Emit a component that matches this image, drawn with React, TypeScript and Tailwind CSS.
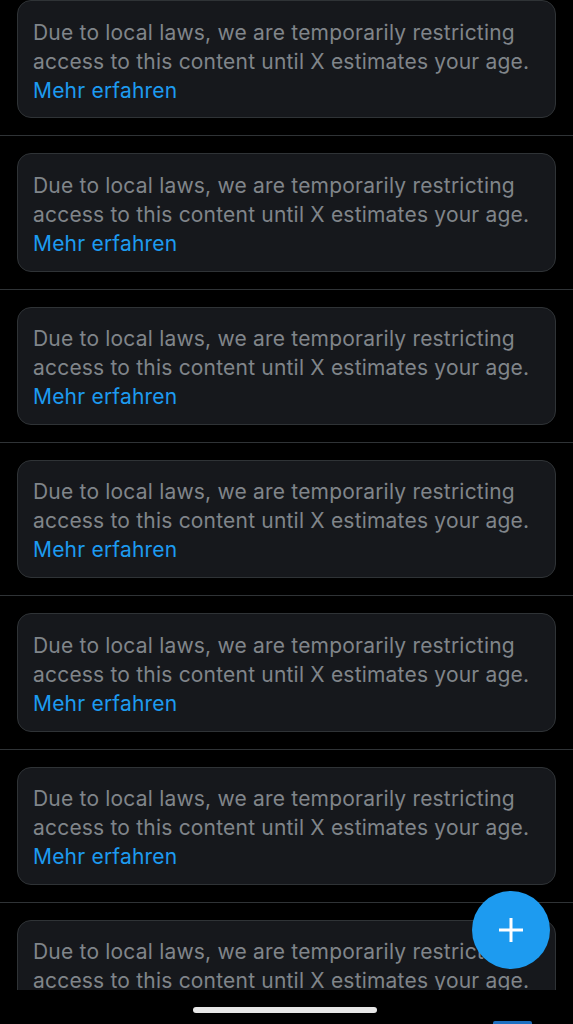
import React from "react";

const Item = ({ last }: { last?: boolean }) => (
  <div className={`px-[17px] py-[17px] ${last ? "" : "border-b border-[#2f3336]"}`}>
    <div className="flex flex-col rounded-[14px] border border-[#2f3336] bg-[#16181c] h-[118.33px] px-[15px] pt-[16.5px] text-[21px] leading-[29px] tracking-[0.2px]">
      <p className="text-[#80858a]">
        Due to local laws, we are temporarily restricting access to this content until X estimates your age.
      </p>
      <p className="text-[#1d9bf0]">Mehr erfahren</p>
    </div>
  </div>
);

export default function App() {
  return (
    <div
      className="relative w-[573px] h-[1024px] overflow-hidden bg-black"
      style={{ fontFamily: "Inter, 'Noto Sans', sans-serif" }}
    >
      <div className="flex flex-col -mt-[17px]">
        {Array.from({ length: 7 }).map((_, i) => (
          <Item key={i} last={i === 6} />
        ))}
      </div>
      <button className="absolute left-[472px] top-[891px] w-[78px] h-[78px] rounded-full bg-[#1d9bf0] flex items-center justify-center">
        <svg width="26" height="26" viewBox="0 0 26 26">
          <path d="M13 1v24M1 13h24" stroke="white" strokeWidth="3" />
        </svg>
      </button>
      <div className="absolute left-0 right-0 bottom-0 h-[34px] bg-black flex flex-col items-center pt-[17px]">
        <div className="w-[184px] h-[6px] mr-[4px] rounded-full bg-[#e7e7e7]" />
        <div className="absolute left-[493px] bottom-0 w-[39px] h-[3px] rounded-t-[2px] bg-[#1d6fc0]" />
      </div>
    </div>
  );
}
